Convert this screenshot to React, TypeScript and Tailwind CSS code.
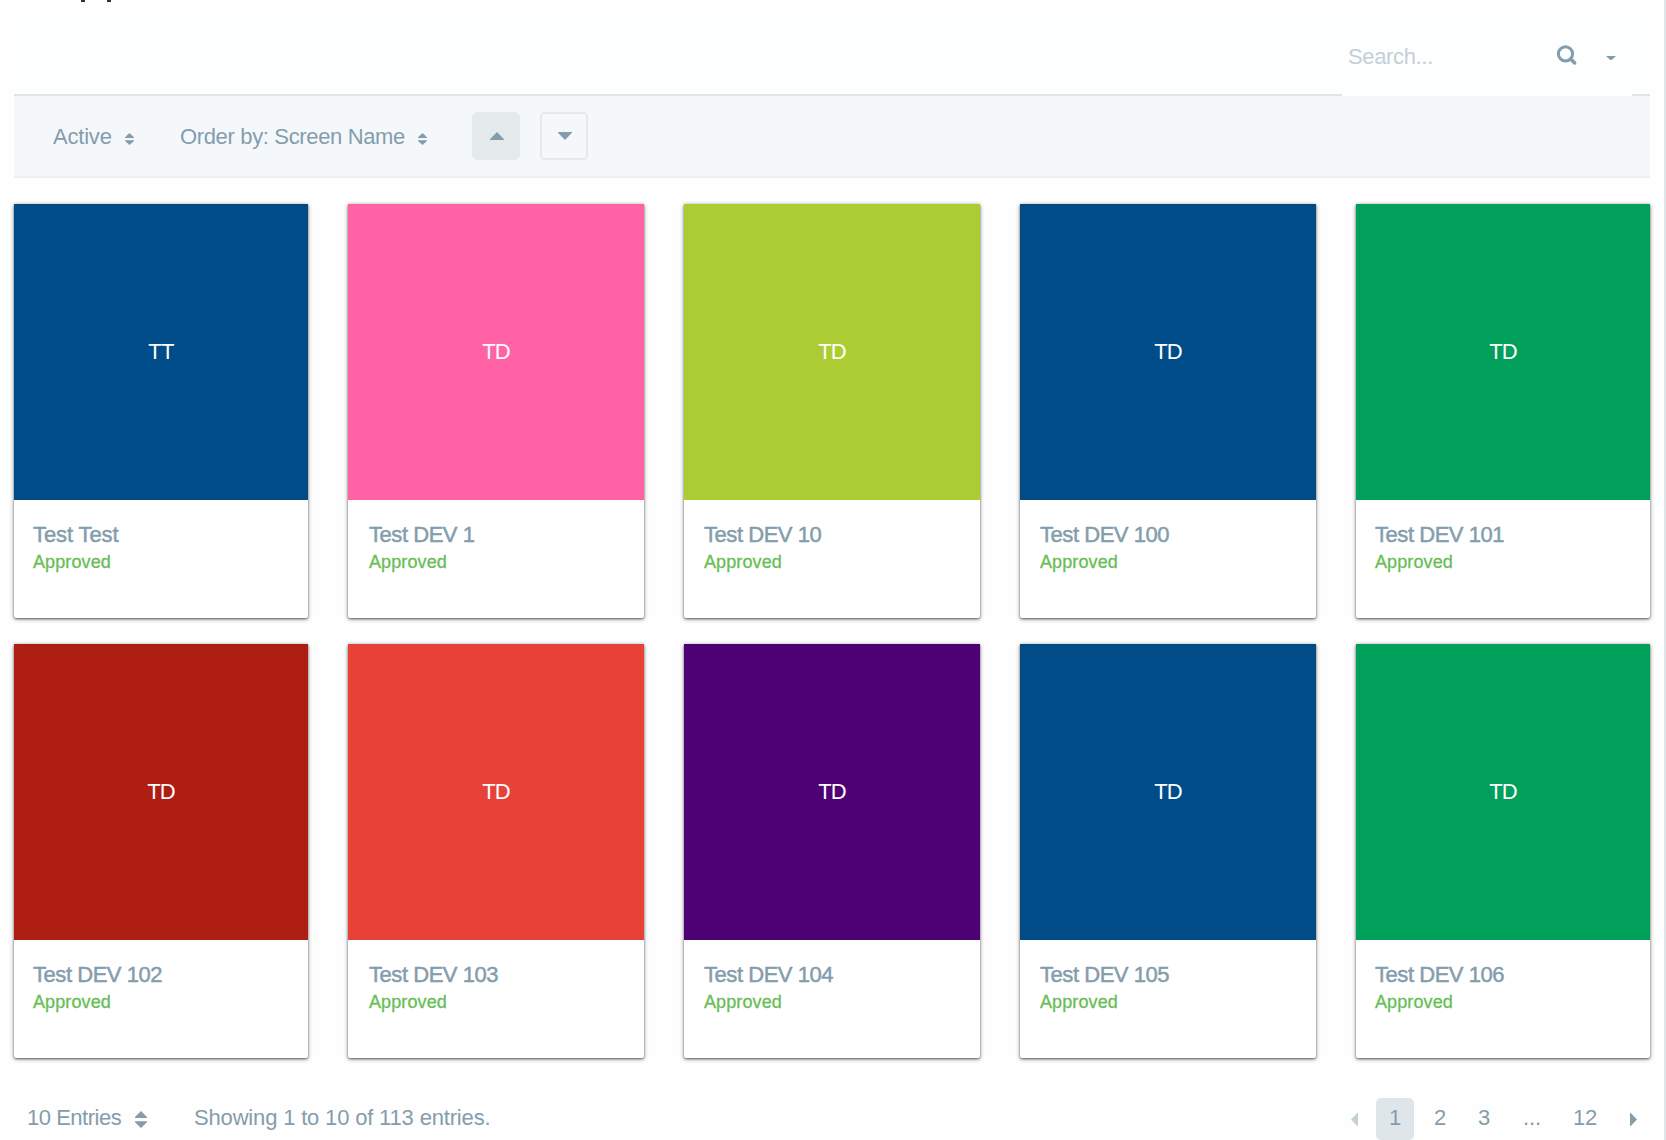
import React from "react";

type Card = { initials: string; name: string; color: string; tracking?: string };

const cards: Card[] = [
  { initials: "TT", name: "Test Test", color: "bg-[#004c89]", tracking: "tracking-[-0.1px]" },
  { initials: "TD", name: "Test DEV 1", color: "bg-[#ff63a5]" },
  { initials: "TD", name: "Test DEV 10", color: "bg-[#abcd33]" },
  { initials: "TD", name: "Test DEV 100", color: "bg-[#004c89]" },
  { initials: "TD", name: "Test DEV 101", color: "bg-[#009f5a]" },
  { initials: "TD", name: "Test DEV 102", color: "bg-[#ae1e13]" },
  { initials: "TD", name: "Test DEV 103", color: "bg-[#e84238]" },
  { initials: "TD", name: "Test DEV 104", color: "bg-[#4e0075]" },
  { initials: "TD", name: "Test DEV 105", color: "bg-[#004c89]" },
  { initials: "TD", name: "Test DEV 106", color: "bg-[#009f5a]" },
];

// Text inset for each of the five columns.
const insets = ["pl-[19px]", "pl-[21px]", "pl-5", "pl-5", "pl-[19px]"];

function SortIcon({ className }: { className: string }) {
  return (
    <svg className={className} viewBox="0 0 9 12" preserveAspectRatio="none" fill="currentColor">
      <path d="M4.5 0 9 4.2V5H0v-.8zM0 7.2h9V8l-4.5 4L0 8z" />
    </svg>
  );
}

function ScreenCard({ card, inset }: { card: Card; inset: string }) {
  return (
    <article className="flex h-[414px] flex-col rounded-b-[2px] bg-white shadow-[0_1px_4px_rgba(0,0,0,0.45),0_1px_2px_rgba(0,0,0,0.4)]">
      <div className={`flex h-[296px] items-center justify-center pb-px text-[22px] leading-6 tracking-[-0.8px] text-white ${card.color}`}>
        {card.initials}
      </div>
      <div className={`pt-[21px] ${inset}`}>
        <h2 className={`text-[22px] leading-7 [-webkit-text-stroke:0.5px_currentColor] ${card.tracking ?? "tracking-[-0.45px]"}`}>{card.name}</h2>
        <p className="mt-px text-[18px] leading-6 tracking-[0.1px] text-[#68bd55] [-webkit-text-stroke:0.3px_currentColor]">Approved</p>
      </div>
    </article>
  );
}

export default function App() {
  return (
    <div className="h-[1140px] w-[1666px] overflow-hidden border-r-2 border-[#dfe6ea] bg-[#fefefe] pl-[14px] pr-[14px] font-['Liberation_Sans',Arial,sans-serif] text-[22px] tracking-[-0.35px] text-[#849dad]">
      <div className="flex h-4 items-start gap-[22px] pl-[67px]">
        <span className="h-[2px] w-1 bg-[#26383f]" />
        <span className="h-[2px] w-1 bg-[#26383f]" />
      </div>
      <header className="flex h-20 justify-end border-b-2 border-[#e2e5e7] bg-[#fdfefe] pr-[18px]">
        <div className="flex h-20 w-[290px] items-start bg-[#fdfefe]">
          <span className="ml-[6px] mt-[27px] w-[208px] leading-7 text-[#c3d0d7]">Search...</span>
          <svg className="mt-7 h-[22px] w-[22px]" viewBox="0 0 22 22" fill="none" stroke="currentColor">
            <circle cx="9.5" cy="9.9" r="7.1" strokeWidth="3" />
            <path d="m14.7 15 4 4" strokeWidth="3.4" strokeLinecap="round" />
          </svg>
          <svg className="ml-7 mt-10 h-[4px] w-[10px]" viewBox="0 0 10 4" fill="currentColor">
            <path d="M0 0h10L6.3 3.6Q5 4.4 3.7 3.6z" />
          </svg>
        </div>
      </header>
      <div className="flex h-[82px] items-center border-b-2 border-[#eaeff2] bg-[#f4f8fb] pl-[39px]">
        <span className="w-[71.5px] pt-[2px] leading-7 tracking-[-0.2px]">Active</span>
        <SortIcon className="mt-[6px] h-3 w-[9px]" />
        <span className="ml-[46.5px] w-[237.5px] whitespace-nowrap pt-[2px] leading-7">Order by: Screen Name</span>
        <SortIcon className="mt-[6px] h-3 w-[9px]" />
        <button className="ml-[45.5px] flex h-12 w-12 items-center justify-center rounded-[5px] bg-[#e4e9ec] pl-px">
          <svg className="h-2 w-[14px]" viewBox="0 0 14 8" fill="currentColor"><path d="M7 0 14 7.2V8H0v-.8z" /></svg>
        </button>
        <button className="ml-5 flex h-12 w-12 items-center justify-center rounded-[5px] border-2 border-[#e4e9ec] pl-px">
          <svg className="h-2 w-[14px]" viewBox="0 0 14 8" fill="currentColor"><path d="M0 0h14v.8L7 8 0 .8z" /></svg>
        </button>
      </div>
      <main className="mt-[26px] grid grid-cols-[294px_296px_296px_296px_294px] gap-x-10 gap-y-[26px]">
        {cards.map((card, i) => (
          <ScreenCard key={card.name} card={card} inset={insets[i % 5]} />
        ))}
      </main>
      <footer className="mt-10 flex h-[42px] items-center leading-7 tracking-[-0.17px]">
        <span className="ml-[13px] w-[108px] whitespace-nowrap pb-[2px] tracking-[-0.48px]">10 Entries</span>
        <SortIcon className="h-[17px] w-[12px]" />
        <span className="ml-[47px] whitespace-nowrap pb-[2px]">Showing 1 to 10 of 113 entries.</span>
        <nav className="ml-auto flex items-center pr-[13px]">
          <svg className="mr-[18px] h-[13px] w-[7px] text-[#c3d0d7]" viewBox="0 0 7 13" fill="currentColor"><path d="M0 6.5 6.3 0H7v13h-.7z" /></svg>
          <span className="flex h-[42px] w-[38px] items-center justify-center rounded-[5px] bg-[#dfe6ea] pb-[2px]">1</span>
          <span className="ml-[7px] w-[38px] pb-[2px] text-center">2</span>
          <span className="ml-[6px] w-[38px] pb-[2px] text-center">3</span>
          <span className="ml-[10px] w-[38px] pb-[2px] text-center">...</span>
          <span className="ml-[9px] w-[50px] pb-[2px] text-center">12</span>
          <svg className="ml-[20px] h-[13px] w-[7px]" viewBox="0 0 7 13" fill="currentColor"><path d="M7 6.5.7 0H0v13h.7z" /></svg>
        </nav>
      </footer>
    </div>
  );
}
